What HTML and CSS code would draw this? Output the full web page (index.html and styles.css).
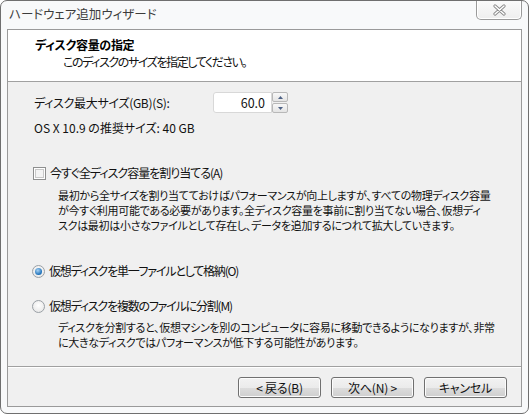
FILE: index.html
```html
<!DOCTYPE html>
<html lang="ja">
<head>
<meta charset="utf-8">
<link rel="stylesheet" href="styles.css">
</head>
<body>
<div class="window">
  <div class="titlebar">
    <div class="title">ハードウェア追加ウィザード</div>
    <div class="close">
      <svg width="17" height="12" viewBox="0 0 17 12">
        <path d="M4 2 L13 10 M13 2 L4 10" stroke="#8a8a8a" stroke-width="3.2" stroke-linecap="round"/>
        <path d="M4 2 L13 10 M13 2 L4 10" stroke="#ffffff" stroke-width="1.4" stroke-linecap="round"/>
      </svg>
    </div>
  </div>
  <div class="client">
    <div class="header">
      <div class="h-title">ディスク容量の指定</div>
      <div class="h-sub">このディスクのサイズを指定してください。</div>
    </div>
    <div class="body">
      <div class="row size-row">
        <span class="size-label">ディスク最大サイズ(GB)(S):</span>
        <div class="spin">
          <div class="spin-input">60.0</div>
          <div class="spin-btns">
            <div class="spin-btn"><svg width="5" height="3" viewBox="0 0 5 3"><path d="M0 3 L2.5 0 L5 3 Z" fill="#4d6185"/></svg></div>
            <div class="spin-btn"><svg width="5" height="3" viewBox="0 0 5 3"><path d="M0 0 L2.5 3 L5 0 Z" fill="#4d6185"/></svg></div>
          </div>
        </div>
      </div>
      <div class="row rec">OS X 10.9 の推奨サイズ: 40 GB</div>
      <div class="row opt check-row">
        <span class="checkbox"></span>
        <span class="opt-label">今すぐ全ディスク容量を割り当てる(A)</span>
      </div>
      <p class="desc desc1">最初から全サイズを割り当てておけばパフォーマンスが向上しますが、すべての物理ディスク容量<br>が今すぐ利用可能である必要があります。全ディスク容量を事前に割り当てない場合、仮想ディ<br>スクは最初は小さなファイルとして存在し、データを追加するにつれて拡大していきます。</p>
      <div class="row opt radio-row1">
        <span class="radio checked"><span class="dot"></span></span>
        <span class="opt-label">仮想ディスクを単一ファイルとして格納(O)</span>
      </div>
      <div class="row opt radio-row2">
        <span class="radio"></span>
        <span class="opt-label">仮想ディスクを複数のファイルに分割(M)</span>
      </div>
      <p class="desc desc2">ディスクを分割すると、仮想マシンを別のコンピュータに容易に移動できるようになりますが、非常<br>に大きなディスクではパフォーマンスが低下する可能性があります。</p>
    </div>
    <div class="footer">
      <button class="btn">&lt; 戻る(B)</button>
      <button class="btn">次へ(N) &gt;</button>
      <button class="btn">キャンセル</button>
    </div>
  </div>
</div>
</body>
</html>
```

FILE: styles.css
```css
* { box-sizing: border-box; }
html, body {
  margin: 0;
  padding: 0;
  width: 529px;
  height: 414px;
  background: #ffffff;
  overflow: hidden;
}
body {
  font-family: "Noto Sans CJK JP", "Noto Sans", sans-serif;
  font-size: 12px;
  color: #111111;
  font-feature-settings: "palt";
}
.window {
  width: 529px;
  height: 414px;
  border: 1px solid #6f6f6f;
  border-radius: 7px;
  background: #f8f9fa;
  display: flex;
  flex-direction: column;
  overflow: hidden;
}
.titlebar {
  height: 28px;
  flex: none;
  display: flex;
  justify-content: space-between;
  align-items: flex-start;
}
.title {
  padding: 5px 0 0 8px;
  line-height: 16px;
  font-size: 12.5px;
  color: #3c3c3c;
}
.close {
  width: 46px;
  height: 20px;
  margin-top: -1px;
  margin-right: 6px;
  border: 1px solid #9a9a9a;
  border-top: none;
  border-radius: 0 0 5px 5px;
  background: linear-gradient(#fbfbfb, #eeeeee);
  box-shadow: inset 0 0 0 1px #ffffff;
  display: flex;
  align-items: center;
  justify-content: center;
}
.close svg { display: block; }
.client {
  flex: 1;
  margin: 0 6px 6px 6px;
  border: 1px solid #9a9a9a;
  display: flex;
  flex-direction: column;
  background: #f0f0f0;
}
.header {
  height: 52px;
  flex: none;
  background: #ffffff;
  border-bottom: 1px solid #a0a0a0;
  padding: 7px 0 0 27px;
}
.h-title {
  font-weight: bold;
  line-height: 16px;
  color: #000;
  letter-spacing: -0.3px;
}
.h-sub {
  line-height: 16px;
  margin-top: 1px;
  padding-left: 28px;
  letter-spacing: -1.4px;
}
.body {
  flex: 1;
  padding: 10px 0 0 26px;
}
.row {
  display: flex;
  align-items: center;
  line-height: 16px;
}
.size-row {
  height: 21px;
}
.size-label {
  width: 179px;
  letter-spacing: -0.3px;
}
.spin {
  display: flex;
  align-items: stretch;
  height: 21px;
}
.spin-input {
  width: 59px;
  height: 21px;
  background: #ffffff;
  border: 1px solid #d8d8d8;
  border-radius: 3px 0 0 3px;
  text-align: right;
  padding-right: 6px;
  line-height: 19px;
  font-size: 12.5px;
}
.spin-btns {
  display: flex;
  flex-direction: column;
  gap: 1px;
  width: 16px;
}
.spin-btn {
  flex: 1;
  border: 1px solid #b8b8b8;
  border-radius: 2px;
  background: linear-gradient(#f8f8f8, #e4e4e4);
  display: flex;
  align-items: center;
  justify-content: center;
}
.spin-btn svg { display: block; }
.rec {
  margin-top: 7px;
}
.check-row {
  margin-top: 29px;
  height: 16px;
}
.opt-label {
  margin-left: 4px;
  letter-spacing: -1px;
}
.radio-row1 .opt-label,
.radio-row2 .opt-label {
  letter-spacing: -1.2px;
}
.checkbox {
  width: 13px;
  height: 13px;
  margin-left: -1px;
  border: 1px solid #8e8f8f;
  background: #f4f4f4;
  box-shadow: inset 0 0 0 1px #ffffff, inset 0 0 0 2px #c9c9c9;
  flex: none;
}
.desc {
  margin: 7px 0 0 24px;
  font-size: 11px;
  line-height: 15px;
  letter-spacing: -0.3px;
  white-space: nowrap;
}
.radio-row1 { margin-top: 30px; }
.radio-row2 { margin-top: 19px; }
.radio {
  width: 13px;
  height: 13px;
  margin-left: -2px;
  border-radius: 50%;
  border: 1px solid #9aa0a6;
  background: radial-gradient(circle at 50% 40%, #ffffff, #e2e2e2);
  display: flex;
  align-items: center;
  justify-content: center;
  flex: none;
}
.radio .dot {
  width: 7px;
  height: 7px;
  border-radius: 50%;
  background: radial-gradient(circle at 40% 35%, #a9d3f5, #1b6fb8 70%, #134f87);
}
.desc2 { margin-top: 6px; }
.footer {
  height: 40px;
  flex: none;
  border-top: 1px solid #a0a0a0;
  box-shadow: inset 0 1px 0 #ffffff;
  display: flex;
  justify-content: flex-end;
  align-items: flex-start;
  gap: 10px;
  padding: 10px 14px 0 0;
}
.btn {
  width: 83px;
  height: 21px;
  border: 1px solid #707070;
  border-radius: 3px;
  background: linear-gradient(#f2f2f2 0%, #ebebeb 50%, #dddddd 51%, #cfcfcf 100%);
  box-shadow: inset 0 0 0 1px #fcfcfc;
  font-family: inherit;
  font-size: 12px;
  font-feature-settings: "palt";
  letter-spacing: -0.2px;
  color: #111111;
  padding: 0;
  line-height: 18px;
}
```
